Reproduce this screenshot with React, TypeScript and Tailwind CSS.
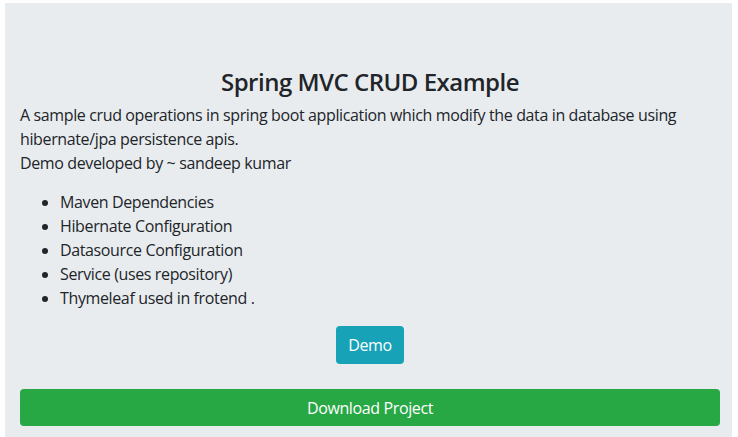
export default function App() {
  const items = [
    "Maven Dependencies",
    "Hibernate Configuration",
    "Datasource Configuration",
    "Service (uses repository)",
    "Thymeleaf used in frotend .",
  ];

  return (
    <div
      className="w-[738px] h-[437px] overflow-hidden bg-white pt-[3px] pl-[5px] pr-[6px] text-[#212529] tracking-[-0.37px]"
      style={{ fontFamily: '"Open Sans", "Noto Sans", Arial, sans-serif' }}
    >
      <div className="bg-[#e9ecef] h-[500px] pt-[64px] pl-[15px] pr-[12px]">
        <h4 className="text-center text-[24px] leading-[29px] font-semibold mb-[7px] tracking-[-0.5px]">
          Spring MVC CRUD Example
        </h4>
        <p className="text-[16px] leading-[24px] mb-[15px]">
          A sample crud operations in spring boot application which modify the data in database using
          hibernate/jpa persistence apis.
          <br />
          Demo developed by ~ sandeep kumar
        </p>
        <ul className="list-disc pl-[40px] text-[16px] leading-[24px] mb-[16px]">
          {items.map((item) => (
            <li key={item}>{item}</li>
          ))}
        </ul>
        <div className="flex justify-center">
          <button className="h-[38px] px-[12px] rounded bg-[#17a2b8] text-white text-[16px] leading-[24px]">
            Demo
          </button>
        </div>
        <button className="mt-[25px] w-full h-[37px] rounded bg-[#28a745] text-white text-[16px] leading-[24px]">
          Download Project
        </button>
      </div>
    </div>
  );
}
